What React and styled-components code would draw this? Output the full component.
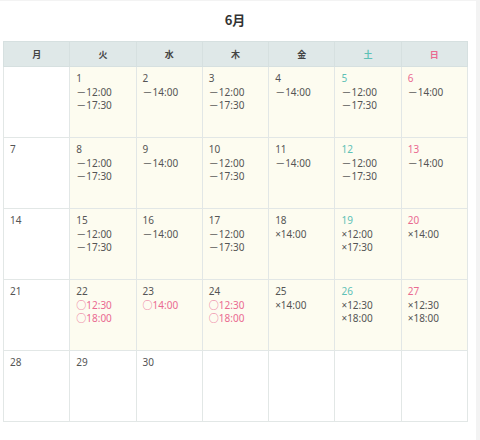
import React from "react";
import styled, { createGlobalStyle } from "styled-components";

const Global = createGlobalStyle`
  html, body { margin: 0; padding: 0; background: #f3f3f3; }
  body { font-family: "Noto Sans", "Noto Sans CJK JP", sans-serif; }
`;

const Page = styled.div`
  width: 476px;
  height: 439px;
  margin-top: 1px;
  background: #fff;
  box-sizing: border-box;
  padding: 0 0 0 3px;
`;

const Title = styled.h2`
  margin: 0;
  height: 40px;
  width: 464px;
  display: flex;
  align-items: center;
  justify-content: center;
  font-family: "Noto Sans CJK JP", sans-serif;
  font-size: 13px;
  font-weight: 700;
  color: #333;
  padding-bottom: 3px;
  box-sizing: border-box;
`;

const Table = styled.table`
  width: 465px;
  border-collapse: collapse;
  table-layout: fixed;
`;

const Th = styled.th`
  height: 24px;
  padding: 0;
  background: #dfe8e8;
  border: 1px solid #d6e0e0;
  font-family: "Noto Sans CJK JP", sans-serif;
  font-size: 9px;
  font-weight: 700;
  color: ${(p) => p.$color || "#444"};
`;

const Td = styled.td`
  height: 71px;
  padding: 5px 6px 0;
  vertical-align: top;
  border: 1px solid #e2e7e6;
  background: ${(p) => (p.$cream ? "#fdfcf0" : "#fff")};
  font-size: 10px;
  line-height: 13.5px;
  color: #555;
  box-sizing: border-box;
`;

const Day = styled.div`
  color: ${(p) => p.$color || "#555"};
`;

const Slot = styled.div`
  color: ${(p) => (p.$open ? "#ea6a90" : "#555")};
  white-space: nowrap;
`;

const SAT = "#5ec1b6";
const SUN = "#ea6a90";

const heads = ["月", "火", "水", "木", "金", "土", "日"];

const D = "－";
const X = "×";
const O = "○";

const weeks = [
  [
    null,
    [1, [D + "12:00", D + "17:30"]],
    [2, [D + "14:00"]],
    [3, [D + "12:00", D + "17:30"]],
    [4, [D + "14:00"]],
    [5, [D + "12:00", D + "17:30"]],
    [6, [D + "14:00"]],
  ],
  [
    [7, []],
    [8, [D + "12:00", D + "17:30"]],
    [9, [D + "14:00"]],
    [10, [D + "12:00", D + "17:30"]],
    [11, [D + "14:00"]],
    [12, [D + "12:00", D + "17:30"]],
    [13, [D + "14:00"]],
  ],
  [
    [14, []],
    [15, [D + "12:00", D + "17:30"]],
    [16, [D + "14:00"]],
    [17, [D + "12:00", D + "17:30"]],
    [18, [X + "14:00"]],
    [19, [X + "12:00", X + "17:30"]],
    [20, [X + "14:00"]],
  ],
  [
    [21, []],
    [22, [O + "12:30", O + "18:00"]],
    [23, [O + "14:00"]],
    [24, [O + "12:30", O + "18:00"]],
    [25, [X + "14:00"]],
    [26, [X + "12:30", X + "18:00"]],
    [27, [X + "12:30", X + "18:00"]],
  ],
  [[28, []], [29, []], [30, []], null, null, null, null],
];

export default function App() {
  return (
    <>
      <Global />
      <Page>
        <Title>6月</Title>
        <Table>
          <thead>
            <tr>
              {heads.map((h, i) => (
                <Th key={h} $color={i === 5 ? SAT : i === 6 ? SUN : undefined}>
                  {h}
                </Th>
              ))}
            </tr>
          </thead>
          <tbody>
            {weeks.map((w, wi) => (
              <tr key={wi}>
                {w.map((c, ci) => (
                  <Td key={ci} $cream={c && c[1].length > 0}>
                    {c && (
                      <>
                        <Day $color={ci === 5 ? SAT : ci === 6 ? SUN : undefined}>{c[0]}</Day>
                        {c[1].map((s) => (
                          <Slot key={s} $open={s.startsWith(O)}>
                            {s}
                          </Slot>
                        ))}
                      </>
                    )}
                  </Td>
                ))}
              </tr>
            ))}
          </tbody>
        </Table>
      </Page>
    </>
  );
}
